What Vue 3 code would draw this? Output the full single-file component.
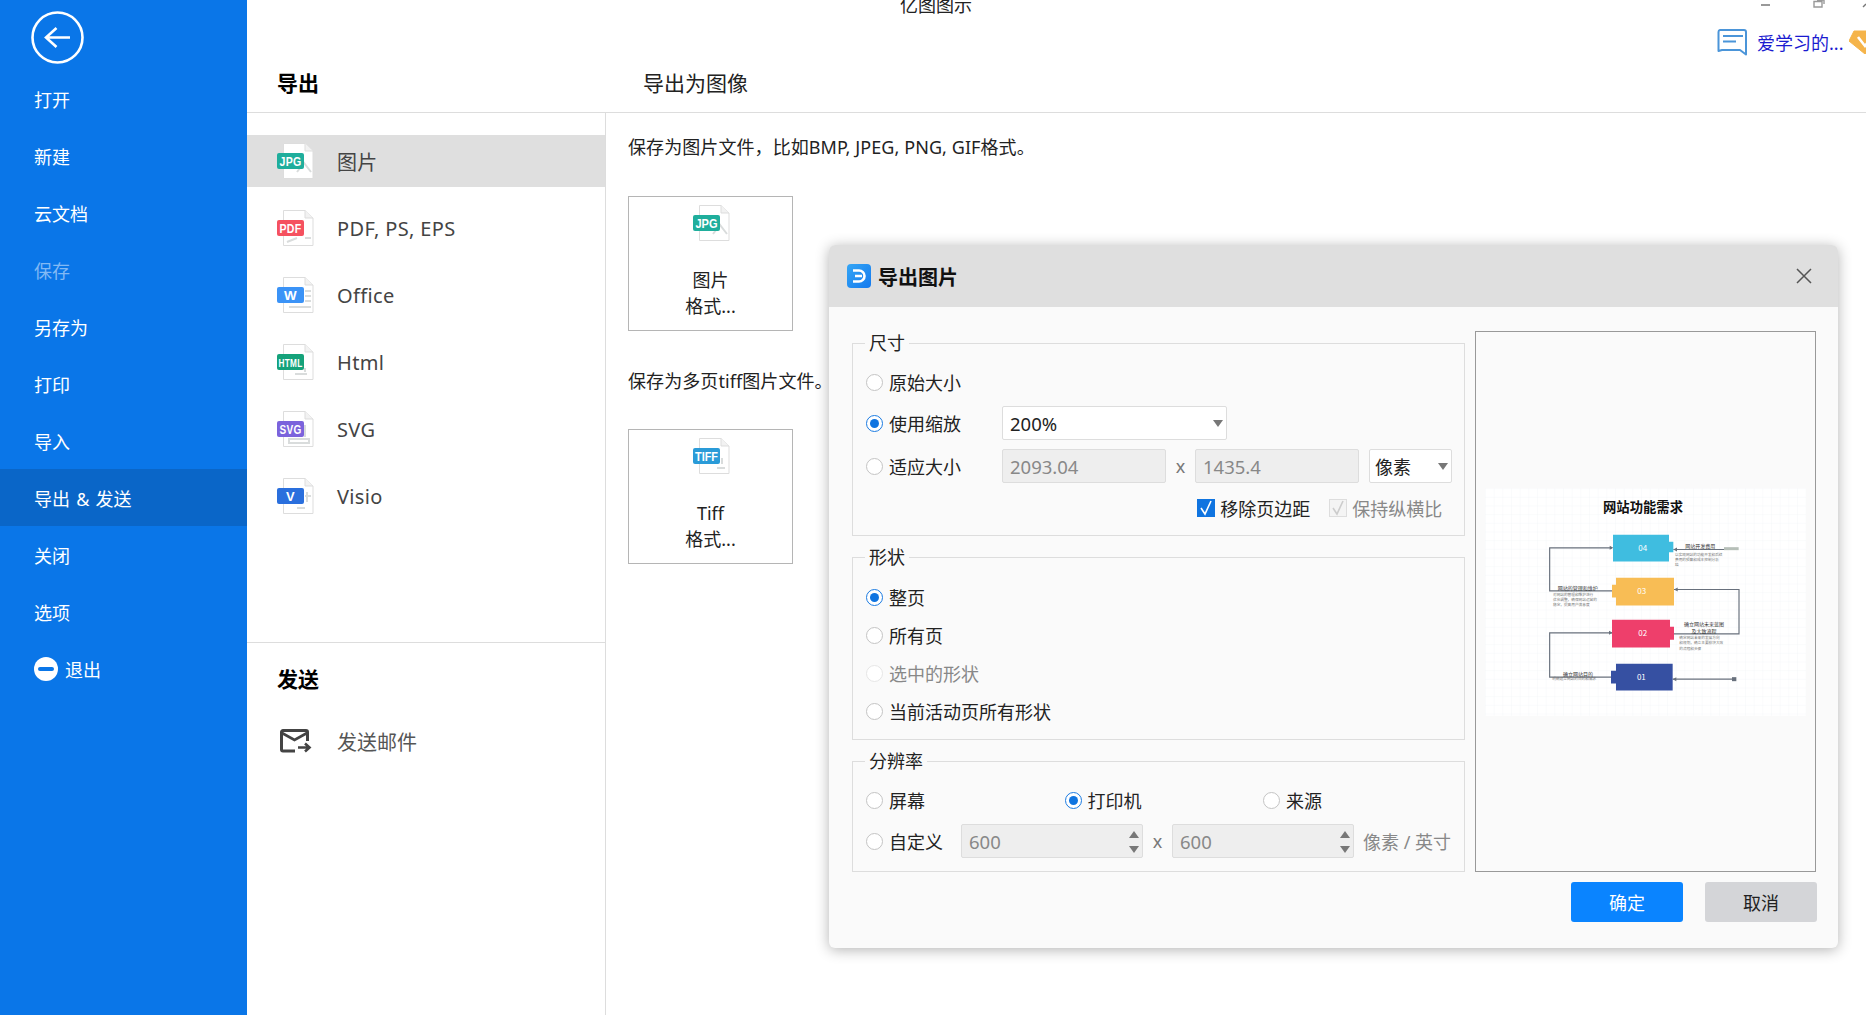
<template>
  <div class="app">
    <aside class="sidebar">
      <button class="back">
        <svg width="53" height="53" viewBox="0 0 53 53">
          <circle cx="26.5" cy="26.5" r="25" fill="none" stroke="#fff" stroke-width="2.6" />
          <path d="M15 26.5H39M25.5 17L15 26.5L25.5 36" fill="none" stroke="#fff" stroke-width="2.6" />
        </svg>
      </button>
      <ul class="menu">
        <li
          v-for="item in menu"
          :key="item.name"
          class="menu-item"
          :class="{ active: item.active, muted: item.muted }"
        >
          <svg v-if="item.quit" class="quit" width="24" height="24" viewBox="0 0 24 24">
            <circle cx="12" cy="12" r="12" fill="#fff" />
            <rect x="4" y="10" width="16" height="4" rx="2" fill="#0a76e8" />
          </svg>
          {{ item.name }}
        </li>
      </ul>
    </aside>

    <main class="main">
      <header class="top">
        <div class="win-row">
          <span class="win-title">亿图图示</span>
          <svg class="win-ctrl" width="105" height="10" viewBox="0 0 105 10">
            <rect x="0" y="4" width="9" height="2" fill="#999" />
            <path d="M53 1.5H61V7H53ZM56 0H63V4" fill="none" stroke="#999" stroke-width="1.4" />
            <path d="M102 7L105 4" stroke="#777" stroke-width="1.4" />
          </svg>
        </div>
        <div class="user-row">
          <div class="user">
            <svg width="31" height="27" viewBox="0 0 31 27">
              <path d="M3 1H27A2 2 0 0 1 29 3V25.5L23 21H5L1.5 22V3A2 2 0 0 1 3 1Z" fill="none" stroke="#4b95d9" stroke-width="2" stroke-linejoin="round" />
              <path d="M6 7H26M6 12.5H19" stroke="#4b95d9" stroke-width="2" />
            </svg>
            <span class="user-name">爱学习的...</span>
            <svg class="gem" width="32" height="24" viewBox="0 0 32 24">
              <path d="M5 1H27L32 11L16 24L0 11Z" fill="#f5b44a" stroke="#f5b44a" stroke-linejoin="round" />
              <path d="M9 7L16 16L23 7" fill="none" stroke="#fff" stroke-width="2.6" />
            </svg>
          </div>
        </div>
        <div class="head-row">
          <h2 class="head-left">导出</h2>
          <h2 class="head-right">导出为图像</h2>
        </div>
      </header>

      <div class="body">
        <section class="col-types">
          <ul class="type-list">
            <li
              v-for="(type, index) in types"
              :key="type.name"
              class="type-row"
              :class="{ selected: index === 0 }"
            >
              <svg class="doc" width="37" height="36" viewBox="0 0 37 36">
                <path d="M6.5 .5H28L36 8V35.5H6.5Z" fill="#fff" stroke="#ddd" />
                <path d="M28 .5V8H36" fill="#f2f2f2" stroke="#ddd" />
                <path :d="type.art" fill="none" stroke="#d9dcdc" stroke-width="2" />
                <rect x="0" y="10" width="27" height="16" rx="2" :fill="type.color" />
                <text
                  x="13.5"
                  y="22.5"
                  text-anchor="middle"
                  fill="#fff"
                  :font-size="type.size"
                  font-weight="700"
                  font-family="Liberation Sans, sans-serif"
                  :textLength="type.fit"
                  lengthAdjust="spacingAndGlyphs"
                >{{ type.badge }}</text>
              </svg>
              <span>{{ type.name }}</span>
            </li>
          </ul>
          <h2 class="send-head">发送</h2>
          <div class="send-row">
            <svg width="32" height="24" viewBox="0 0 32 24">
              <path d="M15 22H3A1.5 1.5 0 0 1 1.5 20.5V3A1.5 1.5 0 0 1 3 1.5H26A1.5 1.5 0 0 1 27.5 3V12" fill="none" stroke="#444" stroke-width="3" />
              <path d="M2 4L14.5 11L27 4" fill="none" stroke="#444" stroke-width="2.6" />
              <path d="M18 18.5H29M25 14.5L29.5 18.5L25 22.5" fill="none" stroke="#444" stroke-width="2.6" />
            </svg>
            <span>发送邮件</span>
          </div>
        </section>

        <section class="col-detail">
          <p class="desc">保存为图片文件，比如BMP, JPEG, PNG, GIF格式。</p>
          <div class="card">
            <svg class="doc" width="37" height="36" viewBox="0 0 37 36">
              <path d="M6.5 .5H28L36 8V35.5H6.5Z" fill="#fff" stroke="#ddd" />
              <path d="M28 .5V8H36" fill="#f2f2f2" stroke="#ddd" />
              <path d="M20 29L27 20L34 29" fill="none" stroke="#d9dcdc" stroke-width="2" />
              <rect x="0" y="10" width="27" height="16" rx="2" fill="#1fae9c" />
              <text x="13.5" y="22.5" text-anchor="middle" fill="#fff" font-size="13" font-weight="700" font-family="Liberation Sans, sans-serif" textLength="22" lengthAdjust="spacingAndGlyphs">JPG</text>
            </svg>
            <span class="card-text">图片<br />格式...</span>
          </div>
          <p class="desc second">保存为多页tiff图片文件。</p>
          <div class="card next">
            <svg class="doc" width="37" height="36" viewBox="0 0 37 36">
              <path d="M6.5 .5H28L36 8V35.5H6.5Z" fill="#fff" stroke="#ddd" />
              <path d="M28 .5V8H36" fill="#f2f2f2" stroke="#ddd" />
              <path d="M24 30H32M29 20V26" fill="none" stroke="#d9dcdc" stroke-width="2" />
              <rect x="0" y="10" width="27" height="16" rx="2" fill="#2a9bd8" />
              <text x="13.5" y="22.5" text-anchor="middle" fill="#fff" font-size="12" font-weight="700" font-family="Liberation Sans, sans-serif" textLength="23" lengthAdjust="spacingAndGlyphs">TIFF</text>
            </svg>
            <span class="card-text">Tiff<br />格式...</span>
          </div>
        </section>
      </div>
    </main>

    <div class="dialog">
      <div class="dlg-title">
        <svg width="24" height="24" viewBox="0 0 24 24">
          <defs>
            <linearGradient id="logo-grad" x1="0" y1="0" x2="1" y2="1">
              <stop offset="0" stop-color="#35a6f5" />
              <stop offset="1" stop-color="#1479ee" />
            </linearGradient>
          </defs>
          <rect width="24" height="24" rx="4" fill="url(#logo-grad)" />
          <path d="M6 6.5H12A5.5 5.5 0 0 1 12 17.5H6M8 12H15" fill="none" stroke="#fff" stroke-width="2.6" />
        </svg>
        <h3>导出图片</h3>
        <svg class="dlg-close" width="16" height="16" viewBox="0 0 16 16">
          <path d="M1 1L15 15M15 1L1 15" stroke="#555" stroke-width="1.5" />
        </svg>
      </div>

      <div class="dlg-main">
        <div class="dlg-form">
          <fieldset>
            <legend>尺寸</legend>
            <div class="rows size-rows">
              <div class="row">
                <label class="opt"><input type="radio" name="size" />原始大小</label>
              </div>
              <div class="row">
                <label class="opt"><input type="radio" name="size" checked />使用缩放</label>
                <div class="select wide">200%<i class="caret"></i></div>
              </div>
              <div class="row">
                <label class="opt"><input type="radio" name="size" />适应大小</label>
                <div class="field fit">2093.04</div>
                <span class="times">x</span>
                <div class="field fit">1435.4</div>
                <div class="select unit">像素<i class="caret"></i></div>
              </div>
              <div class="row checks">
                <label class="check"><i class="box on"><svg width="18" height="18" viewBox="0 0 18 18"><path d="M4 9L8 15L14 2" fill="none" stroke="#fff" stroke-width="1.6" /></svg></i>移除页边距</label>
                <label class="check off"><i class="box"><svg width="18" height="18" viewBox="0 0 18 18"><path d="M4 9L8 15L14 2" fill="none" stroke="#ccc" stroke-width="1.6" /></svg></i>保持纵横比</label>
              </div>
            </div>
          </fieldset>

          <fieldset>
            <legend>形状</legend>
            <div class="rows shape-rows">
              <label v-for="shape in shapes" :key="shape.name" class="opt tall" :class="{ off: shape.off }">
                <input type="radio" name="shape" :checked="shape.on" :disabled="shape.off" />{{ shape.name }}
              </label>
            </div>
          </fieldset>

          <fieldset>
            <legend>分辨率</legend>
            <div class="rows res-rows">
              <div class="row">
                <label class="opt res"><input type="radio" name="res" />屏幕</label>
                <label class="opt res"><input type="radio" name="res" checked />打印机</label>
                <label class="opt res"><input type="radio" name="res" />来源</label>
              </div>
              <div class="row">
                <label class="opt custom"><input type="radio" name="res" />自定义</label>
                <div class="field spin">600<i class="spin-arrows"><b class="up"></b><b class="down"></b></i></div>
                <span class="times">x</span>
                <div class="field spin">600<i class="spin-arrows"><b class="up"></b><b class="down"></b></i></div>
                <span class="dpi">像素 / 英寸</span>
              </div>
            </div>
          </fieldset>
        </div>

        <div class="preview">
          <svg class="thumb" width="321" height="228" viewBox="45 55 963 683" font-family="Noto Sans CJK SC, sans-serif">
            <defs>
              <pattern id="grid" x="45" y="55" width="26" height="26" patternUnits="userSpaceOnUse">
                <path d="M26 0H0V26" fill="none" stroke="#f1f3f6" stroke-width="2" />
              </pattern>
            </defs>
            <rect x="45" y="55" width="963" height="683" fill="#fff" />
            <rect x="45" y="55" width="963" height="683" fill="url(#grid)" />
            <text x="519" y="126" text-anchor="middle" font-size="40" font-weight="700" fill="#111">网站功能需求</text>

            <g fill="none" stroke="#68707c" stroke-width="3.5">
              <path d="M426 234H239V363H426" />
              <path d="M610 239H765" />
              <path d="M612 359H807V492H612" />
              <path d="M426 489H239V622H423" />
              <path d="M608 628H795" />
            </g>
            <path d="M762 232H806V241H762Z" fill="#b6bfb8" />
            <g fill="#68707c">
              <path d="M430 234L419 228V240Z" />
              <path d="M610 239L621 233V245Z" />
              <path d="M612 359L623 353V365Z" />
              <path d="M428 489L417 483V495Z" />
              <path d="M608 628L619 622V634Z" />
              <rect x="786" y="622" width="13" height="12" />
            </g>

            <g>
              <path d="M429 195H597V216H610V247H597V275H429Z" fill="#3fbde0" />
              <path d="M438 324H612V407H438V383H426V345H438Z" fill="#f8bd55" />
              <path d="M426 450H600V471H612V510H600V533H426Z" fill="#ee3f6b" />
              <path d="M438 582H608V662H438V641H423V603H438Z" fill="#3650a2" />
            </g>
            <g fill="#fff" font-size="24" text-anchor="middle">
              <text x="518" y="245">04</text>
              <text x="515" y="374">03</text>
              <text x="518" y="500">02</text>
              <text x="514" y="632">01</text>
            </g>
            <g fill="#333" font-size="15" text-anchor="middle">
              <text x="691" y="234">网站开发费用</text>
              <text x="323" y="361">网站的管理和维护</text>
              <text x="702" y="468">确立网站未来蓝图</text>
              <text x="702" y="490">及大致流程</text>
              <text x="324" y="618">确立网站目的</text>
            </g>
            <g fill="#777" font-size="11">
              <text x="615" y="259">以实现网站的功能开发和后续</text>
              <text x="615" y="273">费用的预算和成本控制分析</text>
              <text x="615" y="288">结</text>
              <text x="249" y="380">对网站的管理和维护进行</text>
              <text x="249" y="394">优化调整，确保网站运营的</text>
              <text x="249" y="409">稳定，提高用户满意度</text>
              <text x="628" y="509">确定网站未来的发展方向</text>
              <text x="628" y="524">和规划，确立主要模块大致</text>
              <text x="628" y="540">的流程和步骤</text>
              <text x="247" y="632">明确建立网站的目的和需求</text>
            </g>
          </svg>
        </div>
      </div>

      <div class="dlg-foot">
        <button class="btn primary">确定</button>
        <button class="btn">取消</button>
      </div>
    </div>
  </div>
</template>

<script setup>
const menu = [
  { name: '打开' },
  { name: '新建' },
  { name: '云文档' },
  { name: '保存', muted: true },
  { name: '另存为' },
  { name: '打印' },
  { name: '导入' },
  { name: '导出 & 发送', active: true },
  { name: '关闭' },
  { name: '选项' },
  { name: '退出', quit: true },
]

const types = [
  { name: '图片', badge: 'JPG', color: '#1fae9c', size: 13, fit: 22, art: 'M20 29L27 20L34 29' },
  { name: 'PDF, PS, EPS', badge: 'PDF', color: '#f5515f', size: 13, fit: 22, art: 'M10 32L20 28M28 28H34' },
  { name: 'Office', badge: 'W', color: '#3b93f7', size: 13, fit: 13, art: 'M28 14H34M28 19H34M28 24H34M12 30H34' },
  { name: 'Html', badge: 'HTML', color: '#15a27a', size: 10, fit: 24, art: 'M18 30H30M28 24V28' },
  { name: 'SVG', badge: 'SVG', color: '#7b63dc', size: 13, fit: 22, art: 'M12 28H32V32H12ZM28 14V26' },
  { name: 'Visio', badge: 'V', color: '#2a6fdd', size: 13, fit: 9, art: 'M28 18H34M20 30H28M30 14V24' },
]

const shapes = [
  { name: '整页', on: true },
  { name: '所有页' },
  { name: '选中的形状', off: true },
  { name: '当前活动页所有形状' },
]
</script>

<style>
html,
body {
  margin: 0;
  width: 1866px;
  height: 1015px;
  overflow: hidden;
  background: #fff;
}
</style>

<style scoped>
.app {
  position: relative;
  display: flex;
  width: 1866px;
  height: 1015px;
  overflow: hidden;
  background: #fff;
  color: #222;
  font-family: "Noto Sans", "Noto Sans CJK SC", sans-serif;
  font-size: 18px;
}

h2,
h3,
p,
ul {
  margin: 0;
  padding: 0;
}

ul {
  list-style: none;
}

/* Sidebar */
.sidebar {
  width: 247px;
  flex-shrink: 0;
  background: #0a76e8;
  color: #fff;
}

.back {
  display: block;
  width: 53px;
  height: 53px;
  margin: 11px 0 0 31px;
  padding: 0;
  border: 0;
  background: none;
}

.menu {
  margin-top: 6px;
}

.menu-item {
  display: flex;
  align-items: center;
  height: 57px;
  padding-left: 34px;
  word-spacing: 1.5px;
}

.menu-item.active {
  background: #0a66c8;
}

.menu-item.muted {
  color: #82b9f4;
}

.quit {
  margin-right: 7px;
}

/* Main area */
.main {
  flex: 1;
  display: flex;
  flex-direction: column;
  min-width: 0;
}

.top {
  height: 113px;
  flex-shrink: 0;
  box-sizing: border-box;
  border-bottom: 1px solid #ddd;
}

.win-row {
  display: flex;
  height: 21px;
}

.win-title {
  margin: -4px 0 0 653px;
  height: 18px;
  line-height: 18px;
  white-space: nowrap;
}

.win-ctrl {
  margin-left: auto;
}

.user-row {
  display: flex;
  align-items: center;
  justify-content: flex-end;
  height: 42px;
}

.user {
  display: flex;
  align-items: center;
  width: 149px;
  flex-shrink: 0;
  overflow: hidden;
}

.user svg {
  flex-shrink: 0;
}

.user-name {
  margin-left: 9px;
  color: #1a1ad0;
  white-space: nowrap;
}

.gem {
  margin-left: 6px;
}

.head-row {
  display: flex;
  height: 40px;
  line-height: 40px;
}

.head-left {
  width: 366px;
  padding-left: 30px;
  box-sizing: border-box;
  color: #000;
  font-size: 21px;
  font-weight: 700;
}

.head-right {
  padding-left: 30px;
  font-size: 21px;
  font-weight: 400;
}

.body {
  flex: 1;
  display: flex;
  min-height: 0;
}

/* File type column */
.col-types {
  width: 359px;
  flex-shrink: 0;
  box-sizing: border-box;
  border-right: 1px solid #ddd;
  color: #444;
  font-size: 20px;
}

.type-list {
  display: flex;
  flex-direction: column;
  gap: 15px;
  box-sizing: border-box;
  height: 530px;
  padding-top: 22px;
  border-bottom: 1px solid #ddd;
  letter-spacing: 0.35px;
}

.type-row {
  display: flex;
  align-items: center;
  gap: 23px;
  height: 52px;
  padding-left: 30px;
}

.type-row.selected {
  background: #dfdfdf;
}

.doc {
  flex-shrink: 0;
}

.send-head {
  margin-top: 18px;
  padding-left: 30px;
  color: #000;
  font-size: 21px;
  line-height: 36px;
}

.send-row {
  display: flex;
  align-items: center;
  gap: 25px;
  height: 52px;
  margin-top: 18px;
  padding-left: 33px;
  color: #555;
}

/* Detail column */
.col-detail {
  flex: 1;
  padding: 21px 0 0 22px;
}

.desc {
  line-height: 26px;
  letter-spacing: 0.08px;
  white-space: nowrap;
}

.desc.second {
  margin-top: 37px;
}

.card {
  display: flex;
  flex-direction: column;
  align-items: center;
  box-sizing: border-box;
  width: 165px;
  height: 135px;
  margin-top: 36px;
  padding-top: 8px;
  border: 1px solid #b5b5b5;
}

.card.next {
  margin-top: 35px;
}

.card .doc {
  margin-left: 1px;
}

.card-text {
  margin-top: 26px;
  line-height: 26px;
  text-align: center;
}

/* Export dialog */
.dialog {
  position: absolute;
  left: 829px;
  top: 245px;
  width: 1009px;
  height: 703px;
  border-radius: 6px;
  background: #fafafa;
  box-shadow: 0 2px 14px rgba(0, 0, 0, 0.3);
}

.dlg-title {
  display: flex;
  align-items: center;
  gap: 7px;
  height: 62px;
  padding: 0 26px 0 18px;
  border-radius: 6px 6px 0 0;
  background: #dfdfdf;
}

.dlg-title h3 {
  color: #111;
  font-size: 20px;
  font-weight: 700;
}

.dlg-close {
  margin-left: auto;
}

.dlg-main {
  display: flex;
  gap: 10px;
  padding: 24px 22px 0 23px;
}

.dlg-form {
  display: flex;
  flex-direction: column;
  gap: 8px;
  width: 614px;
  margin-top: -1px;
}

fieldset {
  margin: 0;
  padding: 0;
  border: 1px solid #ddd;
  min-width: 0;
}

legend {
  margin-left: 12px;
  padding: 0 4px;
  line-height: 26px;
}

.rows {
  padding-left: 13px;
}

.size-rows {
  padding-top: 9px;
  padding-bottom: 10px;
}

.shape-rows {
  padding-top: 8px;
  padding-bottom: 9px;
}

.res-rows {
  display: flex;
  flex-direction: column;
  gap: 7px;
  padding-top: 9px;
  padding-bottom: 13px;
}

.row {
  display: flex;
  align-items: center;
  height: 34px;
}

.size-rows .row + .row {
  margin-top: 7px;
}

.size-rows .row:nth-child(3) {
  margin-top: 9px;
}

.size-rows .row.checks {
  margin-top: 8px;
}

.opt {
  display: flex;
  align-items: center;
  flex-shrink: 0;
  white-space: nowrap;
}

.size-rows .opt {
  width: 136px;
}

.opt.tall {
  height: 38px;
}

.opt.off {
  color: #888;
}

.opt.res {
  width: 198.5px;
}

.opt.custom {
  width: 95px;
}

input[type="radio"] {
  appearance: none;
  position: relative;
  width: 17px;
  height: 17px;
  margin: 0 6px 0 0;
  border: 1px solid #c4c4c4;
  border-radius: 50%;
  background: #fff;
  flex-shrink: 0;
}

input[type="radio"]:checked {
  border-color: #1a7be2;
}

input[type="radio"]:checked::after {
  content: "";
  position: absolute;
  left: 3px;
  top: 3px;
  width: 9px;
  height: 9px;
  border-radius: 50%;
  background: #0f74e0;
}

input[type="radio"]:disabled {
  border-color: #e6e6e6;
}

.select,
.field {
  display: flex;
  align-items: center;
  position: relative;
  box-sizing: border-box;
  height: 34px;
  padding-left: 7px;
  border: 1px solid #ddd;
  border-radius: 2px;
  font-size: 18.5px;
  white-space: nowrap;
}

.select {
  background: #fff;
}

.select.wide {
  width: 225px;
}

.select.unit {
  width: 83px;
  margin-left: 10px;
  padding-left: 5px;
  font-size: 18px;
}

.caret {
  position: absolute;
  right: 3px;
  top: 13px;
  border-style: solid;
  border-width: 7px 5px 0;
  border-color: #777 transparent transparent;
}

.field {
  background: #eee;
  color: #888;
}

.field.fit {
  width: 164px;
}

.field.spin {
  width: 182px;
}

.times {
  width: 29px;
  flex-shrink: 0;
  color: #777;
  text-align: center;
}

.spin-arrows {
  position: absolute;
  right: 3px;
  top: 6px;
  display: flex;
  flex-direction: column;
  gap: 8px;
}

.spin-arrows b {
  display: block;
  border-style: solid;
  border-color: #777 transparent;
}

.spin-arrows .up {
  border-width: 0 5px 7px;
}

.spin-arrows .down {
  border-width: 7px 5px 0;
}

.dpi {
  margin-left: 9px;
  color: #888;
  white-space: nowrap;
}

.checks {
  justify-content: flex-end;
  gap: 19px;
  padding-right: 22px;
}

.check {
  display: flex;
  align-items: center;
  gap: 5px;
}

.box {
  display: block;
  box-sizing: border-box;
  width: 18px;
  height: 18px;
  border: 1px solid #ddd;
  background: #f4f4f4;
}

.box svg {
  display: block;
  margin: -1px;
}

.box.on {
  border-color: #0f74e0;
  background: #0f74e0;
}

.check.off {
  color: #888;
}

.preview {
  display: flex;
  align-items: center;
  justify-content: center;
  box-sizing: border-box;
  width: 341px;
  height: 541px;
  border: 1px solid #999;
}

.thumb {
  display: block;
}

.dlg-foot {
  display: flex;
  justify-content: flex-end;
  gap: 22px;
  margin-top: 10px;
  padding-right: 21px;
}

.btn {
  width: 112px;
  height: 40px;
  border: 0;
  border-radius: 3px;
  background: #d4d5d8;
  color: #222;
  font: inherit;
}

.btn.primary {
  background: #0a84ff;
  color: #fff;
}
</style>
